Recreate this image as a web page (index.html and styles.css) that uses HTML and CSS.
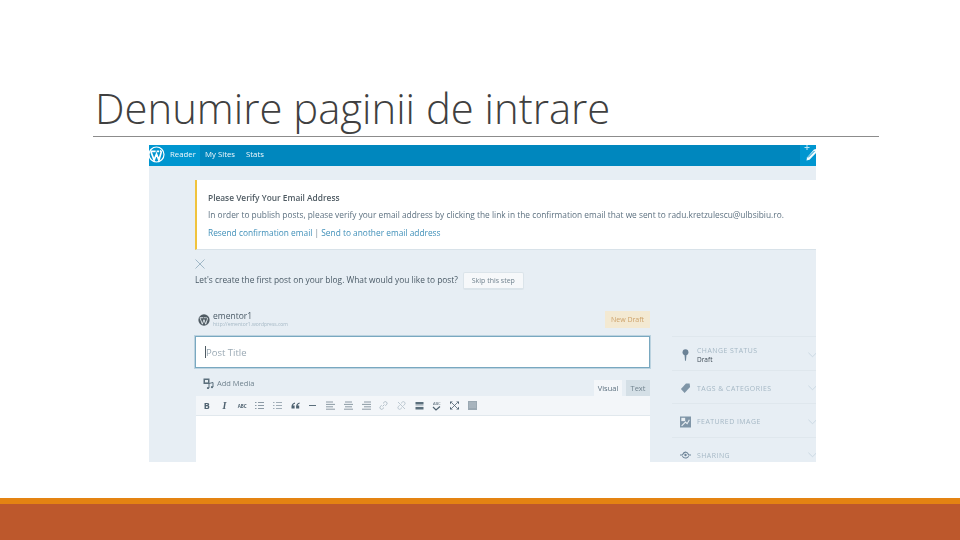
FILE: index.html
```html
<!DOCTYPE html>
<html lang="en">
<head>
    <meta charset="UTF-8">
    <title>Denumire paginii de intrare</title>
    <link rel="stylesheet" href="styles.css">
</head>
<body>
<div class="slide">
    <div class="slide-head">
        <h1>Denumire paginii de intrare</h1>
    </div>

    <div class="shot">
        <!-- top bar -->
        <div class="topbar">
            <div class="topbar-left">
                <svg class="wp-logo" viewBox="0 0 20 20"><circle cx="10" cy="10" r="8.8" fill="none" stroke="#fff" stroke-width="1.4"/><path d="M3.6 7 L7.2 16.6 L10 9.4 L12.8 16.6 L15.2 8.6 Q16.2 6 14 5.6 M2.8 6.4 H9 M10.2 6.4 H13" fill="none" stroke="#fff" stroke-width="2"/></svg>
                <span class="nav-item">Reader</span>
            </div>
            <span class="nav-item">My Sites</span>
            <span class="nav-item">Stats</span>
            <div class="new-post">
                <svg viewBox="0 0 16 21"><path d="M7 0 V5 M4.500 2.500 H9.500" stroke="#bfe6f5" stroke-width="1" fill="none"/><path d="M7 12.500 L6.500 15.500 L9.500 14.800 L16 8 L16 4 L14 4.500 Z" fill="#f2fafd"/><path d="M8 12.500 L14.500 6" stroke="#0096d0" stroke-width="1"/></svg>
            </div>
        </div>

        <div class="content">
            <!-- verify notice -->
            <div class="notice">
                <p class="notice-title">Please Verify Your Email Address</p>
                <p class="notice-text">In order to publish posts, please verify your email address by clicking the link in the confirmation email that we sent to radu.kretzulescu@ulbsibiu.ro.</p>
                <p class="notice-links"><a>Resend confirmation email</a> <span>|</span> <a>Send to another email address</a></p>
            </div>

            <svg class="close-x" viewBox="0 0 10 10"><path d="M0.5 0.5 L9.5 9.5 M9.5 0.5 L0.5 9.5" stroke="#8fa9bb" stroke-width="0.8"/></svg>

            <div class="prompt">
                <span>Let's create the first post on your blog. What would you like to post?</span>
                <button class="skip">Skip this step</button>
            </div>

            <div class="editor-wrap">
                <div class="editor-main">
                    <div class="blog-row">
                        <svg class="blog-logo" viewBox="0 0 20 20"><circle cx="10" cy="10" r="9.4" fill="#4f5b63"/><path d="M3.6 7 L7.2 17 L10 9.4 L12.8 17 L15.6 8.6 Q16.2 6 14 5.6 M2.8 6.2 H9 M10.2 6.2 H13" fill="none" stroke="#e9eff3" stroke-width="1.5"/></svg>
                        <div class="blog-names">
                            <div class="blog-name">ementor1</div>
                            <div class="blog-url">http://ementor1.wordpress.com</div>
                        </div>
                        <span class="draft-badge">New Draft</span>
                    </div>

                    <div class="title-input"><span class="caret"></span>Post Title</div>

                    <div class="media-row">
                        <div class="add-media">
                            <svg viewBox="0 0 11 11"><rect x="0.5" y="0.5" width="6" height="5.5" fill="#5b6f7c"/><rect x="2" y="2" width="3" height="2.4" fill="#e9eff3"/><path d="M6 10 V5.5 L10 4.5 V9" fill="none" stroke="#5b6f7c" stroke-width="1"/><circle cx="5" cy="10" r="1.1" fill="#5b6f7c"/><circle cx="9" cy="9.2" r="1.1" fill="#5b6f7c"/></svg>
                            Add Media
                        </div>
                        <div class="tabs">
                            <span class="tab tab-on">Visual</span>
                            <span class="tab">Text</span>
                        </div>
                    </div>

                    <div class="toolbar">
                        <span class="tool tool-b">B</span>
                        <span class="tool tool-i">I</span>
                        <span class="tool tool-abc">ABC</span>
                        <span class="tool"><svg viewBox="0 0 9 9"><path d="M0 1.5H1.5M3 1.5H9M0 4.5H1.5M3 4.5H9M0 7.5H1.5M3 7.5H9" stroke="#71838f" stroke-width="0.8"/></svg></span>
                        <span class="tool"><svg viewBox="0 0 9 9"><path d="M0 1.5H1.5M3 1.5H9M0 4.5H1.5M3 4.5H9M0 7.5H1.5M3 7.5H9" stroke="#8a9aa6" stroke-width="0.8"/></svg></span>
                        <span class="tool"><svg viewBox="0 0 9 7"><path d="M4 0.5 Q1 1 0.5 4 V6.5 H3.6 V3.4 H2 Q2.2 2 4 1.8 Z M8.6 0.5 Q5.6 1 5.1 4 V6.5 H8.2 V3.4 H6.6 Q6.8 2 8.6 1.8 Z" fill="#4f6270"/></svg></span>
                        <span class="tool"><svg viewBox="0 0 9 9"><path d="M1 4.5H8" stroke="#5b6f7c" stroke-width="1"/></svg></span>
                        <span class="tool"><svg viewBox="0 0 9 9"><path d="M0 1H7M0 3.4H9M0 5.8H7M0 8.2H9" stroke="#71838f" stroke-width="0.8"/></svg></span>
                        <span class="tool"><svg viewBox="0 0 9 9"><path d="M1 1H8M0 3.4H9M1 5.8H8M0 8.2H9" stroke="#71838f" stroke-width="0.8"/></svg></span>
                        <span class="tool"><svg viewBox="0 0 9 9"><path d="M2 1H9M0 3.4H9M2 5.8H9M0 8.2H9" stroke="#71838f" stroke-width="0.8"/></svg></span>
                        <span class="tool"><svg viewBox="0 0 9 9"><path d="M3.6 5.4 L5.4 3.6 M4 2.4 L5.6 0.9 Q6.6 0.2 7.6 1.2 Q8.6 2.3 7.8 3.2 L6.4 4.8 M5 6.6 L3.4 8 Q2.4 8.8 1.4 7.8 Q0.4 6.7 1.2 5.8 L2.6 4.2" fill="none" stroke="#a9b8c2" stroke-width="0.9"/></svg></span>
                        <span class="tool"><svg viewBox="0 0 9 9"><path d="M4 2.4 L5.6 0.9 Q6.6 0.2 7.6 1.2 Q8.6 2.3 7.8 3.2 L6.4 4.8 M5 6.6 L3.4 8 Q2.4 8.8 1.4 7.8 Q0.4 6.7 1.2 5.8 L2.6 4.2 M1 1 L8 8" fill="none" stroke="#b6c3cc" stroke-width="0.9"/></svg></span>
                        <span class="tool"><svg viewBox="0 0 9 9"><path d="M0.5 1H8.500V3.500H0.5Z M0.5 6H8.500V8.500H0.5Z" fill="#5b6f7c"/><path d="M0.5 4.700H8.500" stroke="#8a9aa6" stroke-width="0.6"/></svg></span>
                        <span class="tool tool-spell"><i>ABC</i><svg viewBox="0 0 9 5"><path d="M1 1 L4 4 L8 0.5" fill="none" stroke="#4f6270" stroke-width="1.2"/></svg></span>
                        <span class="tool"><svg viewBox="0 0 9 9"><path d="M2 2 L7 7 M7 2 L2 7" stroke="#4f6270" stroke-width="0.8"/><path d="M0 0.500H2.800L0 3.300Z M9 0.500H6.200L9 3.300Z M0 8.500H2.800L0 5.700Z M9 8.500H6.200L9 5.700Z" fill="#4f6270"/></svg></span>
                        <span class="tool"><svg viewBox="0 0 9 9"><rect width="9" height="9" fill="#9aa8b2"/><path d="M1 2H8M1 4H8M1 6H8" stroke="#c2ccd3" stroke-width="0.7"/></svg></span>
                    </div>

                    <div class="editor-body"></div>
                </div>

                <!-- right column -->
                <div class="sidebar">
                    <div class="side-row side-status">
                        <svg viewBox="0 0 9 13"><circle cx="4.5" cy="3.6" r="3.2" fill="#6b8296"/><path d="M3.4 6 H5.6 L5 12.6 H4 Z" fill="#6b8296"/></svg>
                        <div class="side-text">
                            <div class="side-label">CHANGE STATUS</div>
                            <div class="side-value">Draft</div>
                        </div>
                        <svg class="chev" viewBox="0 0 10 6"><path d="M0.5 0.5 L5 5 L9.500 0.5" fill="none" stroke="#c8d7e1"/></svg>
                    </div>
                    <div class="side-row side-tags">
                        <svg viewBox="0 0 12 12"><path d="M1 7 L6.500 1 L10.500 1 L11 5 L5 11.500 Z" fill="#7f95a7"/></svg>
                        <div class="side-text"><div class="side-label">TAGS &amp; CATEGORIES</div></div>
                        <svg class="chev" viewBox="0 0 10 6"><path d="M0.5 0.5 L5 5 L9.500 0.5" fill="none" stroke="#c8d7e1"/></svg>
                    </div>
                    <div class="side-row side-image">
                        <svg viewBox="0 0 10 10"><rect width="10" height="10" fill="#7f95a7"/><rect x="1.200" y="1.200" width="3.500" height="3" fill="#e9eff3"/><path d="M1.500 8.500 L5 5 L6.500 6.500 L8.500 3" fill="none" stroke="#e9eff3"/></svg>
                        <div class="side-text"><div class="side-label">FEATURED IMAGE</div></div>
                        <svg class="chev" viewBox="0 0 10 6"><path d="M0.5 0.5 L5 5 L9.500 0.5" fill="none" stroke="#c8d7e1"/></svg>
                    </div>
                    <div class="side-row side-share">
                        <svg viewBox="0 0 14 10"><path d="M0 5 H3 Q5 0.500 8 1.500 Q10 2 11 5 H14 M3 6.500 Q5 9.500 8 8.800 Q10 8.300 11 6.500" fill="none" stroke="#6b8296" stroke-width="1.300"/><circle cx="7" cy="5" r="1.500" fill="#6b8296"/></svg>
                        <div class="side-text"><div class="side-label">SHARING</div></div>
                        <svg class="chev" viewBox="0 0 10 6"><path d="M0.5 0.5 L5 5 L9.500 0.5" fill="none" stroke="#c8d7e1"/></svg>
                    </div>
                </div>
            </div>
        </div>
    </div>

    <div class="footer-stripe"></div>
    <div class="footer-band"></div>
</div>
</body>
</html>
```

FILE: styles.css
```css
/* page */
html, body {
    margin: 0;
    padding: 0;
}

body {
    background-color: #fff;
    font-family: "Open Sans", sans-serif;
}

.slide {
    width: 960px;
    height: 540px;
    display: flex;
    flex-direction: column;
    overflow: hidden;
}

/* title */
.slide-head {
    height: 137px;
    flex: none;
    box-sizing: border-box;
    margin: 0 81px 0 93px;
    border-bottom: 1px solid #8c8c8c;
    display: flex;
    align-items: flex-end;
}

h1 {
    margin: 0 0 1px 2px;
    font-family: "Open Sans", sans-serif;
    font-weight: 300;
    font-size: 41.800px;
    line-height: 54px;
    color: #404040;
    white-space: nowrap;
}

/* footer */
.footer-stripe {
    height: 6px;
    flex: none;
    margin-top: 36px;
    background-color: #e48312;
}

.footer-band {
    flex: 1;
    background-color: #bd582c;
}

/* screenshot */
.shot {
    width: 667px;
    height: 317px;
    flex: none;
    margin: 8px 0 0 149px;
    background-color: #e7eef4;
    overflow: hidden;
    color: #4f6270;
    font-size: 8px;
    filter: blur(0.45px);
}

.topbar {
    height: 21px;
    box-sizing: border-box;
    padding-bottom: 3px;
    background-color: #0087be;
    display: flex;
    align-items: center;
    color: #f0f8fc;
    font-size: 7.800px;
    position: relative;
}

.topbar-left {
    width: 51px;
    height: 21px;
    margin-bottom: -3px;
    padding-bottom: 3px;
    box-sizing: border-box;
    background-color: #0096d0;
    display: flex;
    align-items: center;
    gap: 5px;
}

.wp-logo {
    width: 17px;
    height: 17px;
    flex: none;
    margin-left: -1px;
}

.nav-item {
    margin-right: 11px;
    white-space: nowrap;
}

.topbar-left .nav-item {
    margin-right: 0;
}

.topbar > .nav-item:first-of-type {
    margin-left: 5px;
}

.new-post {
    margin-left: auto;
    width: 16px;
    height: 21px;
    margin-bottom: -3px;
    background-color: #0096d0;
}

.new-post svg {
    display: block;
    width: 16px;
    height: 21px;
}

.content {
    padding: 14px 0 0 46px;
}

/* notice */
.notice {
    height: 70px;
    box-sizing: border-box;
    padding: 12px 0 0 11px;
    background-color: #fff;
    border-left: 2px solid #f0c33c;
    border-bottom: 1px solid #d8e2e9;
    font-size: 8.350px;
    color: #5d7180;
}

.notice p {
    margin: 0;
    line-height: 11px;
    white-space: nowrap;
}

.notice .notice-text {
    margin-top: 5.500px;
}

.notice .notice-links {
    margin-top: 7.500px;
}

.notice-title {
    font-weight: 600;
    color: #4f5b63;
}

.notice-links a {
    color: #3f8fb8;
}

.notice-links span {
    color: #7d8e9a;
}

.close-x {
    display: block;
    width: 10px;
    height: 10px;
    margin-top: 9px;
}

/* prompt */
.prompt {
    display: flex;
    align-items: center;
    margin-top: 1px;
    height: 19px;
    font-size: 8.350px;
    white-space: nowrap;
    color: #4a5a66;
}

.skip {
    margin: 3px 0 0 5px;
    width: 61px;
    height: 18px;
    padding: 0;
    background-color: #f6f8fa;
    border: 1px solid #dbe4ea;
    border-bottom-width: 2px;
    border-radius: 2px;
    font-family: "Open Sans", sans-serif;
    font-size: 7px;
    color: #71838f;
}

/* editor */
.editor-wrap {
    display: flex;
    gap: 22px;
    margin-top: 18px;
}

.editor-main {
    width: 455px;
    flex: none;
}

.blog-row {
    height: 29px;
    box-sizing: border-box;
    padding: 0 0 4px 3px;
    display: flex;
    align-items: center;
}

.blog-logo {
    width: 12px;
    height: 12px;
    flex: none;
}

.blog-names {
    margin-left: 3px;
}

.blog-name {
    font-size: 8.500px;
    line-height: 10px;
    color: #4a5a66;
}

.blog-url {
    font-size: 5px;
    line-height: 7px;
    color: #a5b8c5;
}

.draft-badge {
    margin-left: auto;
    width: 45px;
    height: 17px;
    line-height: 17px;
    text-align: center;
    background-color: #f3e9d2;
    color: #cda26a;
    font-size: 7px;
}

.title-input {
    height: 32px;
    box-sizing: border-box;
    border: 1px solid #79a8c0;
    box-shadow: 0 0 0 1px #bcd3e0;
    background-color: #fff;
    display: flex;
    align-items: center;
    padding-left: 9px;
    font-size: 9.500px;
    color: #9aa9b4;
}

.caret {
    width: 1px;
    height: 12px;
    background-color: #4f5b63;
}

.media-row {
    height: 28px;
    display: flex;
    justify-content: space-between;
    align-items: flex-end;
}

.add-media {
    display: flex;
    align-items: center;
    gap: 3px;
    height: 18px;
    margin-bottom: 4px;
    padding-left: 8px;
    font-size: 7.500px;
    color: #71838f;
}

.add-media svg {
    width: 11px;
    height: 11px;
}

.tabs {
    display: flex;
    gap: 4px;
}

.tab {
    width: 24px;
    height: 16px;
    line-height: 16px;
    text-align: center;
    background-color: #d4dfe6;
    font-size: 7.500px;
    color: #71838f;
}

.tab-on {
    width: 28px;
    background-color: #f3f6f9;
    color: #5d7180;
}

.toolbar {
    height: 20px;
    margin-left: 1px;
    box-sizing: border-box;
    padding-left: 2px;
    background-color: #f3f6f9;
    border-bottom: 1px solid #e1e8ed;
    display: flex;
    align-items: center;
}

.tool {
    width: 17.700px;
    flex: none;
    display: flex;
    flex-direction: column;
    align-items: center;
    justify-content: center;
    color: #4f6270;
}

.tool svg {
    width: 9px;
    height: 9px;
    display: block;
}

.tool-b {
    font-weight: 700;
    font-size: 9px;
}

.tool-i {
    font-family: "Liberation Serif", serif;
    font-style: italic;
    font-weight: 700;
    font-size: 10px;
}

.tool-abc {
    font-size: 4.500px;
    font-weight: 700;
}

.tool-spell i {
    font-style: normal;
    font-size: 4px;
    line-height: 5px;
}

.tool-spell svg {
    height: 5px;
}

.editor-body {
    height: 60px;
    margin-left: 1px;
    background-color: #fff;
}

/* sidebar */
.sidebar {
    width: 150px;
    flex: none;
    margin-top: 29px;
    border-top: 1px solid #dfe7ed;
}

.side-row {
    display: flex;
    align-items: center;
    border-bottom: 1px solid #dfe7ed;
    box-sizing: border-box;
    height: 33.500px;
    padding: 3px 0 0 8px;
}

.side-row > svg:first-child {
    width: 11px;
    height: 12px;
    flex: none;
}

.side-text {
    margin-left: 6px;
    flex: 1;
}

.side-label {
    font-size: 6.900px;
    line-height: 9px;
    letter-spacing: 0.5px;
    color: #a5b8c5;
    white-space: nowrap;
}

.side-value {
    font-size: 6.500px;
    line-height: 9px;
    color: #3d4a54;
}

.side-row .chev {
    width: 9px;
    height: 6px;
    flex: none;
    margin-right: 5px;
}
```
